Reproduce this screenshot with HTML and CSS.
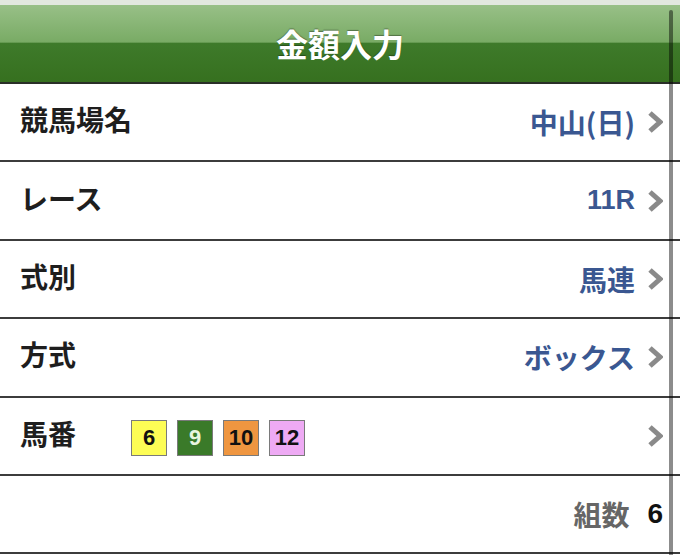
FILE: index.html
```html
<!DOCTYPE html>
<html lang="ja">
<head>
<meta charset="utf-8">
<link rel="stylesheet" href="styles.css">
</head>
<body>
<div class="screen">
  <header class="navbar"><h1 class="title">金額入力</h1></header>
  <ul class="list">
    <li class="row">
      <span class="label">競馬場名</span>
      <span class="value">中山(日)</span>
      <svg class="chev" viewBox="0 0 15 22"><polyline points="2,2 12,11 2,20"/></svg>
    </li>
    <li class="row">
      <span class="label">レース</span>
      <span class="value num">11R</span>
      <svg class="chev" viewBox="0 0 15 22"><polyline points="2,2 12,11 2,20"/></svg>
    </li>
    <li class="row">
      <span class="label">式別</span>
      <span class="value">馬連</span>
      <svg class="chev" viewBox="0 0 15 22"><polyline points="2,2 12,11 2,20"/></svg>
    </li>
    <li class="row">
      <span class="label">方式</span>
      <span class="value">ボックス</span>
      <svg class="chev" viewBox="0 0 15 22"><polyline points="2,2 12,11 2,20"/></svg>
    </li>
    <li class="row">
      <span class="label">馬番</span>
      <span class="badges">
        <span class="badge b-yellow">6</span>
        <span class="badge b-green">9</span>
        <span class="badge b-orange">10</span>
        <span class="badge b-pink">12</span>
      </span>
      <span class="value"></span>
      <svg class="chev" viewBox="0 0 15 22"><polyline points="2,2 12,11 2,20"/></svg>
    </li>
    <li class="row">
      <span class="label"></span>
      <span class="value count"><span class="count-label">組数</span><span class="count-num">6</span></span>
    </li>
  </ul>
  <div class="scrollbar"></div>
</div>
</body>
</html>
```
FILE: styles.css
```css
html, body {
  margin: 0;
  padding: 0;
  background: #fff;
}
body {
  font-family: "Noto Sans CJK JP", "Liberation Sans", sans-serif;
  width: 680px;
  height: 555px;
  overflow: hidden;
}
.screen {
  position: relative;
  width: 680px;
  height: 555px;
}
.navbar {
  box-sizing: border-box;
  height: 84px;
  border-top: 5px solid #e2e8df;
  border-bottom: 2px solid #2a2f28;
  background: linear-gradient(#98c087 0%, #79ab65 48%, #3e7a2a 50%, #36701f 100%);
  display: flex;
  align-items: center;
  justify-content: center;
}
.title {
  margin: 0;
  color: #fff;
  font-size: 32px;
  font-weight: 700;
  line-height: 1;
  text-shadow: 0 -1px 1px rgba(0,0,0,0.35);
  transform: translateY(-1px);
}
.list {
  list-style: none;
  margin: 0;
  padding: 0;
}
.row {
  box-sizing: border-box;
  height: 78.4px;
  border-bottom: 2px solid #3c3c3c;
  display: flex;
  align-items: center;
  padding: 0 17px 0 20px;
}
.label {
  font-size: 28px;
  font-weight: 700;
  color: #1e1e1e;
  line-height: 1;
  transform: translateY(-3px);
}
.value {
  margin-left: auto;
  font-size: 28px;
  font-weight: 700;
  color: #3a5791;
  line-height: 1;
}
.num {
  font-family: "Liberation Sans", "Noto Sans CJK JP", sans-serif;
  font-size: 27px;
}
.chev {
  width: 15px;
  height: 22px;
  margin-left: 13px;
  fill: none;
  stroke: #8a8a8a;
  stroke-width: 5;
  stroke-linecap: butt;
  stroke-linejoin: miter;
}
.badges {
  display: flex;
  gap: 10px;
  margin-left: 55px;
  transform: translateY(2px);
}
.badge {
  box-sizing: border-box;
  width: 36px;
  height: 36px;
  border: 1px solid #7a7a7a;
  display: flex;
  align-items: center;
  justify-content: center;
  font-family: "Liberation Sans", sans-serif;
  font-weight: 700;
  font-size: 22px;
  color: #111;
}
.b-yellow { background: #fdfd55; }
.b-green { background: #3a7a29; color: #e8f5e0; }
.b-orange { background: #ef9640; }
.b-pink { background: #eeaaf4; }
.count {
  display: flex;
  align-items: center;
}
.count-label {
  color: #666;
  font-size: 28px;
}
.count-num {
  color: #111;
  font-family: "Liberation Sans", sans-serif;
  font-size: 28px;
  margin-left: 18px;
}
.scrollbar {
  position: absolute;
  left: 669px;
  top: 10px;
  bottom: 0;
  width: 4px;
  border-radius: 2px 2px 0 0;
  background: rgba(0,0,0,0.45);
}
```
